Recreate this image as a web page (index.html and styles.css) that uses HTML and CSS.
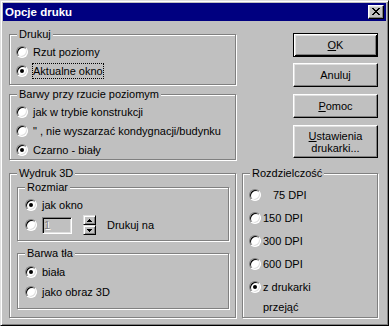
FILE: index.html
```html
<!DOCTYPE html>
<html lang="pl">
<head>
    <meta charset="UTF-8">
    <title>Opcje druku</title>
    <link rel="stylesheet" href="styles.css">
</head>
<body>

<div class="window">
    <div class="titlebar">
        <span class="title">Opcje druku</span>
        <span class="close">
            <svg width="8" height="7" viewBox="0 0 8 7"><path d="M0 0h2v1H0zM6 0h2v1H6zM1 1h2v1H1zM5 1h2v1H5zM2 2h4v1H2zM3 3h2v1H3zM2 4h4v1H2zM1 5h2v1H1zM5 5h2v1H5zM0 6h2v1H0zM6 6h2v1H6z"/></svg>
        </span>
    </div>

    <div class="body">
        <div class="col-top">
            <div class="group g-druk">
                <div class="group-title">Drukuj</div>
                <div class="options">
                    <div class="option"><span class="radio"></span><span>Rzut poziomy</span></div>
                    <div class="option"><span class="radio on"></span><span class="focus">Aktualne okno</span></div>
                </div>
            </div>

            <div class="group g-barwy">
                <div class="group-title">Barwy przy rzucie poziomym</div>
                <div class="options">
                    <div class="option"><span class="radio"></span><span>jak w trybie konstrukcji</span></div>
                    <div class="option"><span class="radio"></span><span class="quote">" , nie wyszarzać kondygnacji/budynku</span></div>
                    <div class="option"><span class="radio on"></span><span>Czarno - biały</span></div>
                </div>
            </div>
        </div>

        <div class="buttons">
            <button class="btn default"><u>O</u>K</button>
            <button class="btn first-gap">Anuluj</button>
            <button class="btn"><u>P</u>omoc</button>
            <button class="btn tall"><u>U</u>stawienia<br>drukarki...</button>
        </div>

        <div class="group g-3d">
            <div class="group-title">Wydruk 3D</div>

            <div class="group sub g-size">
                <div class="group-title">Rozmiar</div>
                <div class="options">
                    <div class="option"><span class="radio on"></span><span>jak okno</span></div>
                    <div class="option row-print">
                        <span class="radio"></span>
                        <span class="field">1</span>
                        <span class="spin">
                            <span class="spin-btn"><svg width="5" height="3" viewBox="0 0 5 3"><path d="M2 0h1v1h1v1h1v1H0V2h1V1h1z"/></svg></span>
                            <span class="spin-btn"><svg width="5" height="3" viewBox="0 0 5 3"><path d="M0 0h5v1H4v1H3v1H2V2H1V1H0z"/></svg></span>
                        </span>
                        <span class="print-on">Drukuj na</span>
                    </div>
                </div>
            </div>

            <div class="group sub g-bg">
                <div class="group-title">Barwa tła</div>
                <div class="options">
                    <div class="option"><span class="radio on"></span><span>biała</span></div>
                    <div class="option"><span class="radio"></span><span>jako obraz 3D</span></div>
                </div>
            </div>
        </div>

        <div class="group g-dpi">
            <div class="group-title">Rozdzielczość</div>
            <div class="options">
                <div class="option"><span class="radio"></span><span class="pad-num">75 DPI</span></div>
                <div class="option"><span class="radio"></span><span>150 DPI</span></div>
                <div class="option"><span class="radio"></span><span>300 DPI</span></div>
                <div class="option"><span class="radio"></span><span>600 DPI</span></div>
                <div class="option"><span class="radio on"></span><span>z drukarki</span></div>
                <div class="more">przejąć</div>
            </div>
        </div>
    </div>
</div>

</body>
</html>
```

FILE: styles.css
```css
body {
    margin: 0;
    background: #c0c0c0;
    font-family: "Liberation Sans", Arial, sans-serif;
    font-size: 11px;
    color: #000;
}

.window {
    box-sizing: border-box;
    width: 389px;
    height: 326px;
    padding: 2px;
    background: #c0c0c0;
    border: 1px solid;
    border-color: #dfdfdf #000 #000 #dfdfdf;
    box-shadow: inset 1px 1px #fff, inset -1px -1px #808080;
}

.titlebar {
    height: 18px;
    padding: 0 2px 0 2px;
    background: #000080;
    display: flex;
    align-items: center;
    justify-content: space-between;
}
.title { color: #fff; font-weight: bold; font-size: 11.5px; }
.close {
    box-sizing: border-box;
    width: 16px;
    height: 14px;
    padding: 2px 0 0 3px;
    display: flex;
    background: #c0c0c0;
    border: 1px solid;
    border-color: #fff #000 #000 #fff;
    box-shadow: inset -1px -1px #808080, inset 1px 1px #dfdfdf;
}
.close svg { display: block; }

.body {
    display: grid;
    grid-template-columns: 227px 136px;
    grid-template-rows: 127px 145px;
    column-gap: 6px;
    row-gap: 12px;
    padding: 13px 0 0 6px;
}

/* group boxes */
.group {
    box-sizing: border-box;
    border: 1px solid #808080;
    box-shadow: 1px 1px #fff, inset 1px 1px #fff;
}
.group-title {
    width: fit-content;
    margin: -7px 0 0 7px;
    padding: 0 2px;
    line-height: 13px;
    background: #c0c0c0;
}
.g-druk { height: 51px; }
.g-barwy { height: 66px; margin-top: 9px; }
.g-3d { height: 145px; }
.g-dpi { height: 145px; }
.sub { width: 212px; margin: 7px 0 0 7px; }
.g-size { height: 54px; }
.g-bg { height: 56px; margin-top: 12px; }

.options {
    display: flex;
    flex-direction: column;
    gap: 3px;
    margin-top: 3px;
    padding-left: 6px;
}
.g-size .options { padding-left: 7px; gap: 2px; }
.g-bg .options { padding-left: 7px; gap: 4px; margin-top: 4px; }
.g-dpi .options { gap: 7px; margin-top: 7px; }

.option {
    display: flex;
    align-items: center;
    gap: 5px;
    height: 16px;
    line-height: 13px;
    white-space: nowrap;
}
.g-dpi .option { gap: 2px; }
.pad-num { padding-left: 10px; }
.more { margin: -1px 0 0 14px; line-height: 13px; }

.radio {
    box-sizing: border-box;
    flex-shrink: 0;
    width: 12px;
    height: 12px;
    border-radius: 50%;
    background: #fff;
    border: 1px solid;
    border-color: #808080 #fff #fff #808080;
    box-shadow: inset 1px 1px #000, inset -1px -1px #dfdfdf;
    display: flex;
    align-items: center;
    justify-content: center;
}
.radio.on::after {
    content: "";
    width: 4px;
    height: 4px;
    border-radius: 50%;
    background: #000;
}

.focus {
    margin-left: -1px;
    padding-top: 1px;
    border: 1px dotted #000;
}

/* disabled text field + spinner */
.row-print { height: 20px; }
.field {
    box-sizing: border-box;
    width: 30px;
    height: 17px;
    padding-left: 1px;
    line-height: 15px;
    color: #808080;
    text-shadow: 1px 1px #fff;
    background: #c0c0c0;
    border: 1px solid;
    border-color: #808080 #fff #fff #808080;
    box-shadow: inset 1px 1px #000, inset -1px -1px #dfdfdf;
}
.spin {
    display: flex;
    flex-direction: column;
    width: 13px;
    margin-left: 6px;
}
.spin-btn {
    box-sizing: border-box;
    height: 10px;
    display: flex;
    align-items: center;
    justify-content: center;
    background: #c0c0c0;
    border: 1px solid;
    border-color: #dfdfdf #000 #000 #dfdfdf;
    box-shadow: inset 1px 1px #fff, inset -1px -1px #808080;
}
.spin-btn svg { display: block; }
.print-on { margin-left: 6px; }

/* push buttons */
.buttons {
    display: flex;
    flex-direction: column;
    align-items: flex-end;
    gap: 7px;
    margin-top: -1px;
}
.btn {
    box-sizing: border-box;
    width: 85px;
    height: 24px;
    padding: 0;
    font-family: inherit;
    font-size: 11px;
    line-height: 13px;
    color: #000;
    background: #c0c0c0;
    border: 1px solid;
    border-color: #fff #000 #000 #fff;
    box-shadow: inset -1px -1px #808080, inset 1px 1px #dfdfdf;
}
.btn.first-gap { margin-top: -1px; }
.btn.default {
    border-color: #000;
    box-shadow: inset 1px 1px #fff, inset -1px -1px #000, inset 2px 2px #dfdfdf, inset -2px -2px #808080;
}
.btn.tall { height: 33px; line-height: 12px; }
```
